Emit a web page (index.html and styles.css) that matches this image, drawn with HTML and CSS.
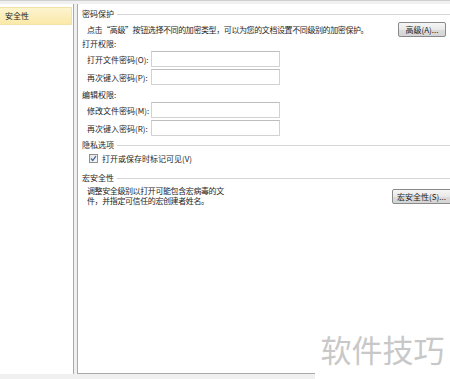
FILE: index.html
```html
<!DOCTYPE html>
<html lang="zh-CN">
<head>
    <meta charset="UTF-8">
    <title>安全性</title>
    <link rel="stylesheet" href="styles.css">
</head>
<body>
    <div class="window">
        <div class="sidebar">
            <div class="nav-item active">安全性</div>
        </div>

        <div class="main">
            <!-- 密码保护 -->
            <div class="section-title"><span>密码保护</span></div>
            <div class="row intro">
                <span class="intro-text">点击“高级”按钮选择不同的加密类型，可以为您的文档设置不同级别的加密保护。</span>
                <button class="btn btn-advanced">高级(<u>A</u>)...</button>
            </div>

            <div class="group-label">打开权限:</div>
            <div class="field first">
                <label>打开文件密码(<u>O</u>):</label>
                <input type="password" class="text-input">
            </div>
            <div class="field">
                <label>再次键入密码(<u>P</u>):</label>
                <input type="password" class="text-input">
            </div>

            <div class="group-label edit">编辑权限:</div>
            <div class="field first">
                <label>修改文件密码(<u>M</u>):</label>
                <input type="password" class="text-input">
            </div>
            <div class="field">
                <label>再次键入密码(<u>R</u>):</label>
                <input type="password" class="text-input">
            </div>

            <!-- 隐私选项 -->
            <div class="section-title privacy"><span>隐私选项</span></div>
            <div class="check-row">
                <span class="checkbox">
                    <svg width="7" height="7" viewBox="0 0 7 7"><path d="M1 3.5 L2.8 5.4 L6 1.2" fill="none" stroke="#4a6a9a" stroke-width="1.3"/></svg>
                </span>
                <span>打开或保存时标记可见(<u>V</u>)</span>
            </div>

            <!-- 宏安全性 -->
            <div class="section-title macro"><span>宏安全性</span></div>
            <div class="macro-row">
                <p class="macro-desc">调整安全级别以打开可能包含宏病毒的文件，并指定可信任的宏创建者姓名。</p>
                <button class="btn btn-macro">宏安全性(<u>S</u>)...</button>
            </div>
        </div>
    </div>

    <div class="watermark">软件技巧</div>
</body>
</html>
```

FILE: styles.css
```css
html, body {
    margin: 0;
    padding: 0;
    height: 100%;
    overflow: hidden;
}
body {
    font-family: "Noto Sans CJK SC", "DejaVu Sans", sans-serif;
    font-size: 8px;
    color: #1e1e1e;
    background-color: #f0f0f0;
    position: relative;
}
.window {
    display: flex;
    height: 374px;
    padding-top: 3px;
    box-sizing: border-box;
    border-top: 1px solid #cfcfcf;
}
.sidebar {
    width: 73px;
    flex-shrink: 0;
    background: #fff;
    border-right: 1px solid #a9a9a9;
    padding-top: 3px;
}
.nav-item {
    height: 16px;
    line-height: 16px;
    padding-left: 5px;
    margin-right: 1px;
}
.nav-item.active {
    background: linear-gradient(#fdf4cf, #fbe9a8);
    border: 1px solid #f3e2a6;
    border-left: none;
}
.main {
    flex: 1;
    margin-left: 3px;
    background: #fff;
    border-left: 1px solid #a9a9a9;
    border-bottom: 1px solid #a9a9a9;
    padding: 4px 0 0 4px;
    overflow: hidden;
    min-width: 0;
}
.section-title {
    display: flex;
    align-items: center;
    height: 12px;
    line-height: 12px;
}
.section-title::after {
    content: "";
    flex: 1;
    border-top: 1px solid #d6d6d6;
    margin-left: 3px;
}
.row {
    display: flex;
    align-items: center;
}
.intro {
    height: 16px;
    margin-top: 1px;
    padding-left: 5px;
}
.intro-text {
    white-space: nowrap;
    letter-spacing: -0.4px;
}
.btn {
    font-family: inherit;
    font-size: 8px;
    color: #1e1e1e;
    height: 15px;
    padding: 0 5px;
    border: 1px solid #8a8a8a;
    border-radius: 2px;
    background: linear-gradient(#f6f6f6 0%, #e8e8e8 50%, #dcdcdc 51%, #d4d4d4 100%);
    white-space: nowrap;
    line-height: 13px;
}
.btn u, label u, .check-row u {
    text-decoration: none;
}
.btn-advanced {
    margin-left: auto;
    margin-right: 4px;
    width: 48px;
    padding: 0;
}
.group-label {
    height: 12px;
    line-height: 12px;
    margin-top: 1px;
}
.group-label.edit {
    margin-top: 4px;
}
.field {
    display: flex;
    align-items: center;
    height: 16px;
    margin-top: 2px;
    padding-left: 5px;
}
.field.first {
    margin-top: 1px;
}
.field label {
    width: 64px;
    white-space: nowrap;
}
.text-input {
    width: 129px;
    height: 16px;
    box-sizing: border-box;
    border: 1px solid #d2d2d2;
    border-top-color: #bdbdbd;
    padding: 0;
    margin: 0;
    background: #fff;
}
.section-title.privacy {
    margin-top: 3px;
}
.check-row {
    display: flex;
    align-items: center;
    height: 12px;
    margin-top: 1px;
    padding-left: 7px;
}
.checkbox {
    width: 7px;
    height: 7px;
    border: 1px solid #8f8f8f;
    background: linear-gradient(135deg, #e4e4e4, #fafafa);
    margin-right: 4px;
    display: flex;
}
.section-title.macro {
    margin-top: 8px;
}
.macro-row {
    display: grid;
    grid-template-columns: 305px auto;
    align-items: center;
    margin-top: 2px;
    padding-left: 5px;
}
.macro-desc {
    margin: 0;
    width: 140px;
    line-height: 10px;
    letter-spacing: -0.4px;
}
.btn-macro {
    justify-self: start;
    width: 64px;
    padding: 0 0 0 4px;
    text-align: left;
}
.watermark {
    position: absolute;
    left: 315px;
    top: 318px;
    width: 135px;
    height: 61px;
    background: #fff;
    color: #c8c8c8;
    font-size: 31px;
    line-height: 61px;
    text-align: center;
    letter-spacing: 0;
}
```
